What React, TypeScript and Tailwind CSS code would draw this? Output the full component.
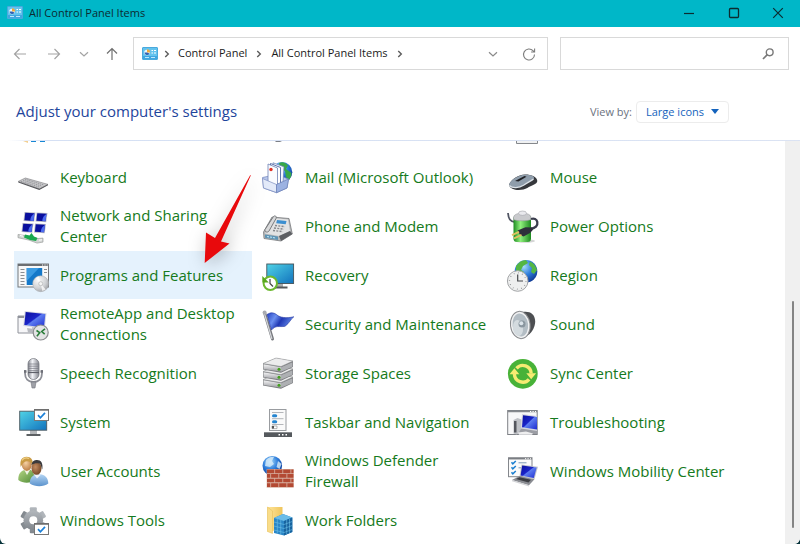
import type { ReactNode } from "react";

function Defs() {
  return (
    <svg className="absolute size-0" aria-hidden="true">
      <defs>
        <linearGradient id="screen" x1="0" y1="0" x2="1" y2="1">
          <stop offset="0" stopColor="#4fd3e6" />
          <stop offset="1" stopColor="#1272bd" />
        </linearGradient>
        <linearGradient id="deep" x1="0" y1="0" x2="1" y2="1">
          <stop offset="0" stopColor="#0a0f9c" />
          <stop offset="0.45" stopColor="#1a24c8" />
          <stop offset="0.5" stopColor="#5c7cf0" />
          <stop offset="1" stopColor="#1c2ad0" />
        </linearGradient>
        <linearGradient id="metal" x1="0" y1="0" x2="0" y2="1">
          <stop offset="0" stopColor="#f4f4f5" />
          <stop offset="1" stopColor="#9b9ca1" />
        </linearGradient>
        <linearGradient id="capsule" x1="0" y1="0" x2="1" y2="0">
          <stop offset="0" stopColor="#83858d" />
          <stop offset="0.4" stopColor="#f3f4f8" />
          <stop offset="1" stopColor="#85878f" />
        </linearGradient>
        <linearGradient id="battery" x1="0" y1="0" x2="1" y2="0">
          <stop offset="0" stopColor="#1e8c22" />
          <stop offset="0.4" stopColor="#8ff07c" />
          <stop offset="1" stopColor="#1d8a20" />
        </linearGradient>
        <radialGradient id="globe" cx="0.4" cy="0.3" r="0.75">
          <stop offset="0" stopColor="#a8dcfb" />
          <stop offset="0.5" stopColor="#2f7fdc" />
          <stop offset="1" stopColor="#0c3590" />
        </radialGradient>
        <radialGradient id="disc" cx="0.35" cy="0.3" r="0.8">
          <stop offset="0" stopColor="#fafafa" />
          <stop offset="0.6" stopColor="#cfd1d4" />
          <stop offset="1" stopColor="#9a9ca0" />
        </radialGradient>
        <linearGradient id="flag" x1="0" y1="0" x2="1" y2="0.4">
          <stop offset="0" stopColor="#2340c0" />
          <stop offset="0.35" stopColor="#6c90f0" />
          <stop offset="0.6" stopColor="#2038b4" />
          <stop offset="1" stopColor="#6288e8" />
        </linearGradient>
        <linearGradient id="gear" x1="0" y1="0" x2="0" y2="1">
          <stop offset="0" stopColor="#b3b8bd" />
          <stop offset="1" stopColor="#81878d" />
        </linearGradient>
        <radialGradient id="skin" cx="0.4" cy="0.35" r="0.7">
          <stop offset="0" stopColor="#f6d2a4" />
          <stop offset="1" stopColor="#b9793f" />
        </radialGradient>
        <radialGradient id="skinDark" cx="0.4" cy="0.4" r="0.7">
          <stop offset="0" stopColor="#c58d62" />
          <stop offset="1" stopColor="#6e4020" />
        </radialGradient>
        <linearGradient id="green" x1="0" y1="0" x2="1" y2="1">
          <stop offset="0" stopColor="#b6d685" />
          <stop offset="1" stopColor="#4e8a35" />
        </linearGradient>
        <linearGradient id="shirt" x1="0" y1="0" x2="0" y2="1">
          <stop offset="0" stopColor="#b6d6f4" />
          <stop offset="1" stopColor="#5c93cd" />
        </linearGradient>
        <linearGradient id="folder" x1="0" y1="0" x2="1" y2="0">
          <stop offset="0" stopColor="#ffe59b" />
          <stop offset="1" stopColor="#efc55b" />
        </linearGradient>
      </defs>
    </svg>
  );
}

function Icon({ children }: { children: ReactNode }) {
  return (
    <svg viewBox="0 0 32 32" className="size-8 shrink-0 overflow-visible" aria-hidden="true">
      {children}
    </svg>
  );
}

function CheckCard({ y }: { y: number }) {
  return (
    <g transform={`translate(17 ${y})`}>
      <rect x="0.5" y="0.5" width="14" height="11" fill="#fff" stroke="#777" />
      <path d="M0 1h15" stroke="#6b6b6b" strokeWidth="1.4" />
      <path d="M4 6.2l2.4 2.6L11 3.8" fill="none" stroke="#1c80d8" strokeWidth="1.7" />
    </g>
  );
}

const keyboard = (
  <Icon>
    <path d="M1.3 20.4l7-3.4L31 23.4l-8.6 4.4z" fill="#c9c9cb" stroke="#77777a" strokeWidth="0.6" />
    <path d="M1.3 20.6v1l21 7.3 8.7-4.6v-1l-8.6 4.4z" fill="#55565a" />
    <path d="M4 20.3l19 6M6 19.2l19 6M8 18.2l19 5.8" stroke="#8a8b90" strokeWidth="0.8" strokeDasharray="1.5 0.7" />
  </Icon>
);

const network = (
  <Icon>
    {[[6.5, 2], [18.5, 2.4], [4.5, 13], [17, 13.4]].map(([x, y]) => (
      <g key={`${x}-${y}`} transform={`translate(${x} ${y})`}>
        <path d="M1 0l11 .6-1.3 9.2L0 9z" fill="#b9bcc8" />
        <path d="M1.8.8l9.2.5-1 7.6L.9 8.3z" fill="#0a109e" />
        <path d="M11 1.3l-1 7.6-3.2-.2C7 5 8 4 11 1.3z" fill="#4d6cf0" />
      </g>
    ))}
    <path d="M1 24.5l7 1 13 3 5-.4v4l-6 1-8-3-11-2.4z" fill="#d3d6d4" stroke="#8e9290" strokeWidth="0.6" />
    <path d="M8 24.5l4.5 1 2-2.5 2.5 3.4 3.5 1.6-1.5 3-6-1-6-2.4z" fill="#19a84e" />
    <path d="M3 25.5l3 .6M22 30.2l3-.4" stroke="#fff" />
  </Icon>
);

const programs = (
  <Icon>
    <rect x="1" y="5" width="30.5" height="23" fill="#f8f8f8" stroke="#75787c" />
    <path d="M1 6h30.5" stroke="#6b6e72" strokeWidth="2" />
    <path d="M25 6h1.2M27.4 6h1.2M29.7 6h1" stroke="#fff" />
    <path d="M3.5 10.5h4M3.5 13.5h4M3.5 16.5h4M3.5 19.5h4M3.5 22.5h4M3.5 25.5h4M27 10.5h3M27 13.5h3" stroke="#8b8e92" />
    <rect x="9.7" y="9" width="15.5" height="17" fill="#1478c9" />
    <path d="M9.7 9H22L9.7 22z" fill="#3b9be2" />
    <circle cx="23.7" cy="24.7" r="8" fill="url(#disc)" stroke="#a5a7aa" strokeWidth="0.5" />
    <path d="M23.7 24.7l-5-5.8 3-1.7zM23.7 24.7l5 5.8-3.4 1.6z" fill="#fff" opacity="0.75" />
    <circle cx="23.7" cy="24.7" r="2" fill="#f5f5f5" stroke="#a9abad" strokeWidth="0.6" />
  </Icon>
);

const remoteApp = (
  <Icon>
    <path d="M1 8h15v17H1z" fill="#f6f6f8" stroke="#8f929a" />
    <path d="M1 9h8" stroke="#8f929a" strokeWidth="2" />
    <path d="M10 20l10 1.5-1 4.5-8-1.6z" fill="#b7b9bf" />
    <path d="M7.7 3L29.5 5.2 27.8 20.8 6.2 18z" fill="#d6d8e2" />
    <path d="M8.7 4L28.4 6 26.9 19.5 7.3 17z" fill="url(#deep)" />
    <circle cx="23.7" cy="24.5" r="7.5" fill="#e3e4e5" stroke="#8b8d90" strokeWidth="1.2" />
    <path d="M19.5 22.5l3.2 2.2-2.8 3.6" fill="none" stroke="#2a7d3a" strokeWidth="1.6" />
    <path d="M28 20.8l-3.3 2.7 3 2.7" fill="none" stroke="#2a7d3a" strokeWidth="1.6" />
  </Icon>
);

const speech = (
  <Icon>
    <path d="M8 13v3c0 5.5 3 9 8.5 9s8.5-3.5 8.5-9v-3" fill="none" stroke="#8d8f97" strokeWidth="1.8" />
    <path d="M7 14.5h2.500M23.500 14.500H26" stroke="#6d6f77" strokeWidth="2.5" />
    <rect x="11" y="1.5" width="11" height="21" rx="5.5" fill="url(#capsule)" stroke="#6f717a" strokeWidth="0.7" />
    <path d="M11.5 7h10M11.5 9.2h10M11.5 11.4h10M11.5 13.6h10" stroke="#74767f" strokeWidth="0.7" />
    <path d="M11 15.5h11" stroke="#5d5f68" strokeWidth="1.2" />
    <path d="M14 25h5l-1 6h-3z" fill="#9fa1a8" stroke="#74767e" strokeWidth="0.6" />
  </Icon>
);

const system = (
  <Icon>
    <path d="M13 24h7v4h-7z" fill="#b5b8bb" />
    <path d="M9.5 28h14v2h-14z" fill="#5c6063" />
    <rect x="2.7" y="5.2" width="27" height="19" fill="url(#screen)" stroke="#4e5a60" strokeWidth="0.9" />
    <CheckCard y={3} />
  </Icon>
);

const users = (
  <Icon>
    <path d="M1.3 25c0-6 2-9.500 8-10.500s8 3 8.500 11c-5 3-12 3-16.500-.5z" fill="url(#green)" />
    <path d="M7 14.500l3 5.500 3-5z" fill="#eef4e4" />
    <ellipse cx="9.8" cy="9.7" rx="5" ry="6.2" fill="url(#skin)" />
    <path d="M3.700 12C2.500 5 5 2 9.500 1.800c4.500 0 7 3 6.300 9.200C14.500 7 12 6 9 6.200 6.500 6.800 5.500 9 3.700 12z" fill="#c99b45" />
    <path d="M5 5.500C6.500 3 9.500 2.500 12 3.500" fill="none" stroke="#f0d084" strokeWidth="1.2" />
    <path d="M12.800 28.500c0-6 3-9 8.200-9.500 7 0 10.300 4 10.300 9.500-5 3.500-13 3.500-18.500 0z" fill="url(#shirt)" />
    <path d="M17 19.500l3 4 4-4z" fill="#eef5fc" />
    <ellipse cx="19.5" cy="13.3" rx="5" ry="6.5" fill="url(#skinDark)" />
    <path d="M14.500 10c.5-4 3-5 5.500-5 4 0 6.300 3 5.300 9.500-1-2.500-1.300-5-2.800-6-2.500-.5-5.500-.5-8 1.500z" fill="#3c3a3c" />
  </Icon>
);

const tools = (
  <Icon>
    <g transform="translate(16.3 16.2)">
      {[0, 60, 120].map((angle) => (
        <rect key={angle} x="-3.5" y="-13" width="7" height="26" rx="1" fill="url(#gear)" transform={`rotate(${angle})`} />
      ))}
      <circle r="9.8" fill="url(#gear)" />
      <circle r="4" fill="#fff" />
    </g>
    <CheckCard y={19} />
  </Icon>
);

const mail = (
  <Icon>
    <circle cx="20" cy="11.2" r="10.3" fill="url(#globe)" />
    <path d="M17 2c4-2 7 0 9 2.500L24 8l4 3c2 0 2 4-1 8l-3-3-1-6-5-3z" fill="#38a848" />
    <path d="M.5 16.500l14-3 12 4.500-1.500 9-10.500 4.700L1.500 27z" fill="#b9c8ec" stroke="#7386bd" strokeWidth="0.7" />
    <path d="M11 1.800l11 4-1 16-10-3z" fill="#f4f7fe" stroke="#6078b0" strokeWidth="0.7" />
    <path d="M8.500 2.500l10 4V24l-10-4z" fill="#fff" stroke="#4e67a4" strokeWidth="0.9" />
    <path d="M6 3l9.500 4v18L6 21z" fill="#fafcff" stroke="#6e82b4" strokeWidth="0.8" />
    <circle cx="9" cy="8.5" r="1.7" fill="#e03224" />
    <path d="M.5 17.500l14 6v8L1.500 27z" fill="#e3eaf9" stroke="#7b8dbe" strokeWidth="0.7" />
    <path d="M14.500 23.500l12-5.500-1.500 9-10.500 4.700z" fill="#9cb2e2" stroke="#6c80b6" strokeWidth="0.7" />
  </Icon>
);

const phone = (
  <Icon>
    <path d="M10 7l17 1.500 3.300 15.500L19 31 2 28.500 1.500 22z" fill="#b7b9bb" stroke="#6b6d70" strokeWidth="0.7" />
    <path d="M11 8l15 1.500 2 11.500-11 5L3 23.500z" fill="#e2e3e4" />
    <path d="M17 26l11-5 2.300 3L19 31z" fill="#5d5f63" />
    <path d="M3 24.500l13 2v3.500L3 27.800z" fill="#5d93b4" />
    <path d="M5 26.500l9 1.500" stroke="#b8e2f5" strokeWidth="1.2" strokeDasharray="2 1" />
    <path d="M15 10l9.500 1-.8 3.200-9.500-1z" fill="#3c8fd0" />
    <path d="M13 15.500l10 1.200M12 18l10 1.200M11 20.500l10 1.200" stroke="#85878b" strokeWidth="1.4" strokeDasharray="2 1.3" />
    <path d="M11.500 6.500C13 5 15 6.500 14 8.500L7 21c-1.500 2-4.500 1-4-1.500z" fill="#d8d9da" stroke="#6d6f73" strokeWidth="0.9" />
  </Icon>
);

const recovery = (
  <Icon>
    <path d="M15 24h6v4h-6z" fill="#a8abad" />
    <path d="M13 27.500h12.500v2H13z" fill="#54585a" />
    <rect x="4.8" y="5" width="26.8" height="19.5" fill="url(#screen)" stroke="#44535a" strokeWidth="0.9" />
    <circle cx="8.3" cy="24.3" r="6.7" fill="#fff" stroke="#6cb82e" strokeWidth="2" />
    <path d="M.3 17v6.500h6.500z" fill="#58a81c" />
    <path d="M8 20v4.500l3 3" fill="none" stroke="#444" strokeWidth="1.2" />
  </Icon>
);

const security = (
  <Icon>
    <path d="M2.500 4.500L10.500 31" stroke="#77797e" strokeWidth="3" strokeLinecap="round" />
    <path d="M2.300 5L10 31" stroke="#d4d6da" strokeWidth="1.2" />
    <path d="M5 6.500c4-2.500 7-2 10 .5s9 3.500 16.800 1.800c-3.500 2.500-4 6-8.800 9.500-6 1-9-1.500-13.500 3.700z" fill="url(#flag)" stroke="#1c30a0" strokeWidth="0.6" />
    <circle cx="2.6" cy="4.6" r="2" fill="#a9abb0" />
  </Icon>
);

const storage = (
  <Icon>
    {[19, 11, 3].map((y) => (
      <g key={y} transform={`translate(0 ${y})`}>
        <path d="M1 3.500L14-2l17 3v6L19 12.700 1 9.500z" fill="#77797c" />
        <path d="M1 3.500L14-2l17 3L19 6.500z" fill="#ececed" stroke="#929497" strokeWidth="0.5" />
        <path d="M1.500 4.300L19 7.200v4.500L1.500 9z" fill="url(#metal)" />
        <path d="M19 7.200l11.500-5v4.500L19 11.700z" fill="#aeb0b3" />
        <circle cx="17" cy="9.2" r="1.5" fill="#43a01f" />
      </g>
    ))}
  </Icon>
);

const taskbar = (
  <Icon>
    <rect x="7.5" y="3.5" width="16.5" height="21" fill="#fafafa" stroke="#999ca0" />
    <path d="M10 6.500h11.500M10 12.700h11.500M10 18.500h11.500" stroke="#a2a5a9" strokeWidth="0.8" />
    <rect x="10" y="8.3" width="5.2" height="3" rx="1.5" fill="#2585d0" />
    <rect x="10" y="14.3" width="5.2" height="3" rx="1.5" fill="#2585d0" />
    <path d="M10 20h5v2.600h-5z" fill="#fff" stroke="#888" strokeWidth="0.6" />
    <path d="M10 20h2v2.600h-2z" fill="#555" />
    <path d="M2 26.300h28V31H2z" fill="#55595d" />
    <path d="M16.500 28.700h10" stroke="#fff" strokeWidth="1.5" strokeDasharray="1.5 2" />
  </Icon>
);

const firewall = (
  <Icon>
    <circle cx="10.3" cy="10.8" r="9.8" fill="url(#globe)" />
    <path d="M4 5c3-3 6-3.500 8-3l-2 4 2 3-4 3-5-1zM16 6l3.500 3-2 5-3-2z" fill="#d9eefa" opacity="0.8" />
    <path d="M4.700 14h27v18.700h-27z" fill="#d8b3a4" />
    {[0, 1, 2, 3].map((row) => (
      <path
        key={row}
        d="M5 16.300h26.500"
        transform={`translate(0 ${row * 4.6})`}
        stroke="#b34a33"
        strokeWidth="3.7"
        strokeDasharray="7.3 0.8"
        strokeDashoffset={row % 2 ? 4 : 0}
      />
    ))}
  </Icon>
);

const workFolders = (
  <Icon>
    <path d="M5.500 3h15v22l-15 3z" fill="url(#folder)" />
    <path d="M5.500 3l5 4v22.500l-5-2z" fill="#f9dc88" stroke="#e2ba55" strokeWidth="0.5" />
    <path d="M12 14l9-4 9.300 3.500V28L22 31.500 12 29z" fill="#2a86c6" />
    <path d="M12 14l9-4 9.300 3.500L22 17z" fill="#6bbce8" />
    <path d="M22 17l8.300-3.500V28L22 31.500z" fill="#17639f" />
    <path d="M12 18l10 2.500 8.300-3M12 22l10 2.500 8.300-3M12 26l10 2.500 8.300-3M15.300 15v14.500M18.700 16v14.500M24.700 16v14M27.500 15v14" fill="none" stroke="#6bbfe8" strokeWidth="0.6" />
  </Icon>
);

const mouse = (
  <Icon>
    <path d="M2 24c2-6 9-10 16-10.500 7 0 12 2.500 12.300 6.500-.3 3.500-6 4-10 7-5 3-17 3-18.300-3z" fill="#36383c" />
    <path d="M2 23.500c2-5 9-9.500 16-9.800 5.500 0 10 1.500 9 3.800-1 2-7.500 3.500-10.500 6.500-4 3-12.500 3.500-14.500-.5z" fill="#8f9dab" />
    <path d="M2.300 24.500c3 3 10 2.500 14.200-.2 4-3 8-4.500 10-6.300" fill="none" stroke="#dce2e8" strokeWidth="1.3" />
    <path d="M8 20l9.500-5 2 .8-8 4.700z" fill="#1f2024" />
  </Icon>
);

const power = (
  <Icon>
    <ellipse cx="18" cy="31" rx="10" ry="1.8" fill="#d5d5d5" />
    <path d="M1 3c.5 6 2 8.500 7 9" fill="none" stroke="#505462" strokeWidth="1.8" />
    <rect x="6.5" y="5" width="17.5" height="27" rx="3.5" fill="url(#battery)" />
    <path d="M6.500 9.500V7.500c0-6 17.500-6 17.500 0v2c-3 1.700-14.500 1.700-17.500 0z" fill="#c9cacd" stroke="#909297" strokeWidth="0.5" />
    <ellipse cx="15.5" cy="3.2" rx="4" ry="2.2" fill="#e9e9ed" stroke="#93959a" strokeWidth="0.5" />
    <path d="M23 19c5.500-.5 8-3.500 7.300-7-.6-3-3.300-4-6.300-3" fill="none" stroke="#3a3d4d" strokeWidth="2.3" />
    <path d="M10.500 20.500l8-3.200 6.500.2 1 2.300-3 3.200-6.500 3.500-3.500-1.500z" fill="#2e303b" />
    <path d="M12 21.800L5 25.200M14.500 24.800L7 28.300" stroke="#e0c060" strokeWidth="1.9" />
  </Icon>
);

const region = (
  <Icon>
    <circle cx="19" cy="12.2" r="11.3" fill="url(#globe)" />
    <path d="M9 7c3-4 6-6 10-6l2 3-5 3-2 4 3 2-3 3-5-3zM23 2.500c4 1.500 6 5 7 8.500l-3 4-3-2 1-4-3-3z" fill="#54b644" />
    <circle cx="10.7" cy="22" r="10.3" fill="#eeefef" stroke="#a4a6a8" strokeWidth="1" />
    <circle cx="10.7" cy="22" r="8.2" fill="none" stroke="#85878a" strokeWidth="1.3" strokeDasharray="0.7 3.593" />
    <path d="M10.700 15.500V22H16" fill="none" stroke="#45484c" strokeWidth="1.2" />
  </Icon>
);

const sound = (
  <Icon>
    <path d="M16 4c7-1 12 2 12.200 9.500 0 6-4 13-10 15z" fill="#4d4f52" />
    <ellipse cx="13.3" cy="17" rx="9.8" ry="13.7" fill="#f0f1f2" stroke="#898b8e" strokeWidth="1" transform="rotate(-7 13.3 17)" />
    <ellipse cx="13.3" cy="17" rx="7.8" ry="11.5" fill="#b3bdc4" transform="rotate(-7 13.3 17)" />
    <ellipse cx="11" cy="20" rx="5" ry="8" fill="#d4dbdf" transform="rotate(-7 11 20)" />
    <circle cx="15" cy="16" r="3.5" fill="#8a969f" />
    <circle cx="14.3" cy="15.3" r="2" fill="#dce4ea" />
  </Icon>
);

const sync = (
  <Icon>
    <circle cx="15.8" cy="16.8" r="14.9" fill="#48b238" />
    <path d="M9.500 11.300A8.400 8.400 0 0 1 24.200 16.500" fill="none" stroke="#f6eb72" strokeWidth="3.4" />
    <path d="M22.100 22.300A8.400 8.400 0 0 1 7.400 17" fill="none" stroke="#f6eb72" strokeWidth="3.4" />
    <path d="M2.500 17.300h9.800l-4.900-6zM19.300 16.300h9.800l-4.900 6z" fill="#f6eb72" />
  </Icon>
);

const troubleshooting = (
  <Icon>
    <rect x="0.7" y="4.5" width="29.5" height="24" fill="#f7f7f8" stroke="#7e8186" />
    <path d="M.7 5.500h29.500" stroke="#85888d" strokeWidth="1.5" />
    <path d="M23 5.500h1.200M25.500 5.500h1.200M28 5.500h1" stroke="#fff" />
    <path d="M6.500 14l4-2 4 1.500V26l-5 2.500-3-1z" fill="#bfc1c6" />
    <path d="M7 15h2.500v11.500H7z" fill="#54565d" />
    <path d="M14.500 22l15.500 2v4H11z" fill="#9b9da4" />
    <path d="M15 8l15 2v15l-16-2.500z" fill="#d4d5dc" />
    <path d="M16 9.200l14 1.900v12.400l-15-2.300z" fill="url(#deep)" />
    <path d="M11 26.500l8-1 7 2-1 1.300H12z" fill="#eeeeef" />
  </Icon>
);

const mobility = (
  <Icon>
    <rect x="1.5" y="2.7" width="23.5" height="19" fill="#fafafa" stroke="#84878c" />
    <path d="M1.500 3.700H25" stroke="#7b7e83" strokeWidth="1.5" />
    <path d="M18 3.700h1.200M20.500 3.700h1.200M23 3.700h1" stroke="#fff" />
    <path d="M4.500 7.300l1.300 1.500 3-2.800M4.500 12.300l1.300 1.500 3-2.800M4.500 17.300l1.300 1.500 3-2.800" fill="none" stroke="#1b7fd0" strokeWidth="1.5" />
    <path d="M11.500 7.800h8M11.500 12.800h6" stroke="#7d99b5" />
    <path d="M14.500 9.500L31 11.700l-3.500 12.500L12.500 21z" fill="#c4c6cc" />
    <path d="M15.200 10.500l14.500 1.900-2.900 10.600-13.200-2.600z" fill="url(#deep)" />
    <path d="M12.500 21l15 3.200-5.500 6L5 25z" fill="#8a8c92" />
    <path d="M12.500 22.200l11.500 2.600-2.500 2.700L9 24z" fill="#3c3e43" />
    <path d="M5 25l17 5.200v1.300L5 26.200z" fill="#d2d3d6" />
  </Icon>
);

interface PanelItem {
  label: string;
  icon: ReactNode;
  hovered?: boolean;
}

const items: PanelItem[] = [
  { label: "Keyboard", icon: keyboard },
  { label: "Mail (Microsoft Outlook)", icon: mail },
  { label: "Mouse", icon: mouse },
  { label: "Network and Sharing Center", icon: network },
  { label: "Phone and Modem", icon: phone },
  { label: "Power Options", icon: power },
  { label: "Programs and Features", icon: programs, hovered: true },
  { label: "Recovery", icon: recovery },
  { label: "Region", icon: region },
  { label: "RemoteApp and Desktop Connections", icon: remoteApp },
  { label: "Security and Maintenance", icon: security },
  { label: "Sound", icon: sound },
  { label: "Speech Recognition", icon: speech },
  { label: "Storage Spaces", icon: storage },
  { label: "Sync Center", icon: sync },
  { label: "System", icon: system },
  { label: "Taskbar and Navigation", icon: taskbar },
  { label: "Troubleshooting", icon: troubleshooting },
  { label: "User Accounts", icon: users },
  { label: "Windows Defender Firewall", icon: firewall },
  { label: "Windows Mobility Center", icon: mobility },
  { label: "Windows Tools", icon: tools },
  { label: "Work Folders", icon: workFolders },
];

function PanelLogo() {
  return (
    <svg viewBox="0 0 16 13" className="h-[13px] w-4 shrink-0" aria-hidden="true">
      <rect x="0.5" y="0.5" width="15" height="12" rx="0.5" fill="#63c3ee" stroke="#4aa9dd" />
      <path d="M1 9h14v3H1z" fill="#3fa6e0" />
      <circle cx="5" cy="5.5" r="2.8" fill="#e6f6ff" />
      <path d="M5 5.500V2.200a3.300 3.300 0 0 1 3.200 3.300z" fill="#f2a93b" />
      <path d="M2.500 5.500a2.600 2.600 0 0 0 5 1L5 5.500z" fill="#2f62b4" />
      <path d="M9.500 3.500h1.500M12 3.500h2M9.500 6h1.500M12 6h2" stroke="#fff" strokeWidth="1.2" />
      <path d="M3 10.500h4M9 10.500h4" stroke="#bfe8fb" />
    </svg>
  );
}

function Glyph({ d, className, width = 1.2 }: { d: string; className: string; width?: number }) {
  return (
    <svg viewBox="0 0 16 16" className={className} fill="none" stroke="currentColor" strokeWidth={width} aria-hidden="true">
      <path d={d} />
    </svg>
  );
}

function Crumb({ children }: { children: ReactNode }) {
  return (
    <>
      <button type="button" className="whitespace-nowrap">{children}</button>
      <Glyph d="M6 4.500L9.500 8 6 11.500" width={1.6} className="mx-[5px] size-[14px] shrink-0 text-[#5c5c5c]" />
    </>
  );
}

function Pointer() {
  return (
    <svg
      viewBox="0 0 56 100"
      className="pointer-events-none absolute -top-[81px] left-[186px] z-10 h-[100px] w-14 overflow-visible drop-shadow-[2px_3px_9px_rgba(0,0,0,0.28)]"
      aria-hidden="true"
    >
      <path d="M51 5L21 71.500l8.500 2L4.700 93 6 62.500l9 5.500L50 5.500z" fill="#e8090c" />
    </svg>
  );
}

export default function App() {
  return (
    <div className="h-screen bg-[#06333a] font-['Open_Sans','Noto_Sans',sans-serif]">
      <Defs />
      <div className="flex h-full flex-col overflow-hidden rounded-b-md bg-white text-[#1b1b1b]">
        <header className="flex h-[27px] shrink-0 items-center bg-[#00b7c8] pb-0.5 pl-[7px] text-[#0c2b30]">
          <PanelLogo />
          <h1 className="ml-1.5 flex-1 text-[11px] leading-4">All Control Panel Items</h1>
          <button type="button" aria-label="Minimize" className="flex h-full w-[45px] items-center justify-center">
            <Glyph d="M3 8.500h10" className="size-4" />
          </button>
          <button type="button" aria-label="Maximize" className="flex h-full w-[45px] items-center justify-center">
            <svg viewBox="0 0 16 16" className="size-4" fill="none" stroke="currentColor" strokeWidth="1.3" aria-hidden="true">
              <rect x="3.5" y="3.5" width="9" height="9" rx="1" />
            </svg>
          </button>
          <button type="button" aria-label="Close" className="flex h-full w-[44px] items-center justify-center">
            <Glyph d="M3.200 3.200l9.600 9.600M12.800 3.200L3.200 12.800" className="size-4" />
          </button>
        </header>

        <nav className="flex shrink-0 items-center pt-2.5 pr-[11px] pl-3" aria-label="Address">
          <button type="button" aria-label="Back" className="text-[#a3a3a3]">
            <Glyph d="M14 8H2.500M7.500 3L2.500 8l5 5" className="size-4" />
          </button>
          <button type="button" aria-label="Forward" className="ml-[18px] text-[#a3a3a3]">
            <Glyph d="M2 8h11.500M8.500 3l5 5-5 5" className="size-4" />
          </button>
          <button type="button" aria-label="Recent locations" className="ml-3.5 text-[#a3a3a3]">
            <Glyph d="M4 6.200L8 10l4-3.800" className="size-4" />
          </button>
          <button type="button" aria-label="Up" className="ml-3 text-[#6f6f6f]">
            <Glyph d="M8 14V2.500M3 7.500l5-5 5 5" className="size-4" />
          </button>
          <div className="ml-[13px] flex h-[33px] flex-1 items-center border border-[#d9d9d9] pl-2 text-[11px]">
            <PanelLogo />
            <Glyph d="M6 4.500L9.500 8 6 11.500" width={1.6} className="mr-1 ml-0.5 size-[14px] shrink-0 text-[#5c5c5c]" />
            <Crumb>Control Panel</Crumb>
            <Crumb>All Control Panel Items</Crumb>
            <button type="button" aria-label="Previous locations" className="ml-auto text-[#8a8a8a]">
              <Glyph d="M4 6.200L8 10l4-3.800" className="size-4" />
            </button>
            <button type="button" aria-label="Refresh" className="mr-2.5 ml-5 text-[#7d7d7d]">
              <Glyph d="M13.500 8.500A5.500 5.500 0 1 1 12 4.700l1.300 1.300M13.600 2.500V6h-3.500" width={1.1} className="size-4" />
            </button>
          </div>
          <label className="ml-3 flex h-[33px] w-[229px] items-center border border-[#d9d9d9] pr-3">
            <input type="search" aria-label="Search Control Panel" className="min-w-0 flex-1 bg-transparent px-2 text-[11px] outline-none" />
            <svg viewBox="0 0 16 16" className="size-4" fill="none" stroke="#787878" aria-hidden="true">
              <circle cx="9.7" cy="6.3" r="3.4" strokeWidth="1.4" />
              <path d="M7.300 8.700L3 13" strokeWidth="1.7" />
            </svg>
          </label>
        </nav>

        <div className="flex shrink-0 items-center justify-between pt-[27px] pr-[71px] pb-[13px] pl-4">
          <h2 className="pb-0.5 text-[15px] leading-7 text-[#1e459c]">Adjust your computer's settings</h2>
          <div className="flex items-center gap-1 text-[11px]">
            <label htmlFor="view" className="text-[#6b7280]">View by:</label>
            <div className="relative">
              <select
                id="view"
                className="h-[22px] w-[93px] appearance-none rounded-sm border border-[#ececec] bg-white pl-[9px] text-[11px] text-[#1463bd]"
              >
                <option>Large icons</option>
              </select>
              <svg viewBox="0 0 8 5" className="pointer-events-none absolute top-2 right-2.5 h-[5px] w-2" aria-hidden="true">
                <path d="M0 0h8L4 5z" fill="#1463bd" />
              </svg>
            </div>
          </div>
        </div>

        <div className="ml-2 h-px shrink-0 bg-linear-to-r from-transparent via-[#d5e0f4] via-5% to-[#dbe3f3]" />

        <div className="flex min-h-0 flex-1">
          <main className="min-w-0 flex-1 overflow-hidden pl-3.5">
            <div className="grid h-3 grid-cols-[repeat(auto-fill,238px)] gap-x-[7px]" aria-hidden="true">
              <svg viewBox="0 0 48 12" className="h-3 w-12">
                <path d="M9 0h5v2z" fill="#f2cf92" />
                <path d="M17 0h5v1h-5zM26 0h5v1h-5z" fill="#1687d4" />
              </svg>
              <svg viewBox="0 0 48 12" className="h-3 w-12">
                <path d="M16 0h7l-2 1h-4z" fill="#7c7f85" />
              </svg>
              <svg viewBox="0 0 48 12" className="h-3 w-12">
                <path d="M12.500 0v2.500h21V0" fill="#f0f1f2" stroke="#85888c" />
              </svg>
            </div>
            <ul className="grid grid-cols-[repeat(auto-fill,238px)] gap-x-[7px] gap-y-px">
              {items.map(({ label, icon, hovered }) => (
                <li key={label} className="relative">
                  <a
                    href="#"
                    className={`flex min-h-12 items-center gap-[11px] pr-2 pl-[3px] text-[15px] leading-[21px] text-[#157a20] ${hovered ? "bg-[#e5f2fd]" : ""}`}
                  >
                    {icon}
                    <span>{label}</span>
                  </a>
                  {hovered && <Pointer />}
                </li>
              ))}
            </ul>
          </main>
          <div className="flex w-[15px] shrink-0 flex-col items-center bg-[#f0f0f0] pt-40 pb-4">
            <div className="w-0.5 flex-1 rounded-full bg-[#858585]" />
          </div>
        </div>
      </div>
    </div>
  );
}
